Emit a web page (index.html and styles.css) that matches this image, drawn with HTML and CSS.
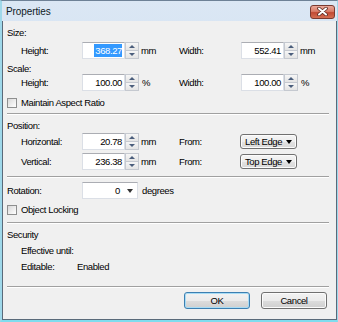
FILE: index.html
```html
<!DOCTYPE html>
<html lang="en">
<head>
    <meta charset="UTF-8">
    <title>Properties</title>
    <link rel="stylesheet" href="styles.css">
</head>
<body>
    <div class="window">
        <div class="titlebar">
            <span class="title">Properties</span>
            <span class="close">
                <svg width="11" height="9" viewBox="0 0 11 9">
                    <path d="M2 1.5 L9 7.5 M9 1.5 L2 7.5" stroke="#5a2a22" stroke-width="3.6" stroke-linecap="round"/>
                    <path d="M2 1.5 L9 7.5 M9 1.5 L2 7.5" stroke="#ffffff" stroke-width="2" stroke-linecap="round"/>
                </svg>
            </span>
        </div>

        <div class="client">
            <!-- Size -->
            <div class="label-row m7">Size:</div>
            <div class="field-row m4">
                <span>Height:</span>
                <span class="spin">
                    <span class="box"><span class="sel">368.27</span></span>
                    <span class="arrows"><i class="up"></i><i class="down"></i></span>
                </span>
                <span class="unit">mm</span>
                <span>Width:</span>
                <span class="spin">
                    <span class="box">552.41</span>
                    <span class="arrows"><i class="up"></i><i class="down"></i></span>
                </span>
                <span class="unit">mm</span>
            </div>

            <!-- Scale -->
            <div class="label-row m5">Scale:</div>
            <div class="field-row">
                <span>Height:</span>
                <span class="spin">
                    <span class="box">100.00</span>
                    <span class="arrows"><i class="up"></i><i class="down"></i></span>
                </span>
                <span class="unit pct">%</span>
                <span>Width:</span>
                <span class="spin">
                    <span class="box">100.00</span>
                    <span class="arrows"><i class="up"></i><i class="down"></i></span>
                </span>
                <span class="unit pct">%</span>
            </div>

            <div class="label-row m7"><span class="check"></span>Maintain Aspect Ratio</div>

            <div class="sep m5"></div>

            <!-- Position -->
            <div class="label-row m6">Position:</div>
            <div class="field-row m2">
                <span>Horizontal:</span>
                <span class="spin">
                    <span class="box">20.78</span>
                    <span class="arrows"><i class="up"></i><i class="down"></i></span>
                </span>
                <span class="unit">mm</span>
                <span>From:</span>
                <span class="combo">Left Edge<i class="caret"></i></span>
            </div>
            <div class="field-row m3">
                <span>Vertical:</span>
                <span class="spin">
                    <span class="box">236.38</span>
                    <span class="arrows"><i class="up"></i><i class="down"></i></span>
                </span>
                <span class="unit">mm</span>
                <span>From:</span>
                <span class="combo">Top Edge<i class="caret"></i></span>
            </div>

            <div class="sep m6"></div>

            <!-- Rotation -->
            <div class="rotation-row m4">
                <span>Rotation:</span>
                <span class="rot"><span class="rot-value">0</span><i class="caret"></i></span>
                <span class="unit">degrees</span>
            </div>

            <div class="label-row m6"><span class="check"></span>Object Locking</div>

            <div class="sep m7"></div>

            <!-- Security -->
            <div class="label-row m6">Security</div>
            <div class="label-row m6 indent">Effective until:</div>
            <div class="label-row m6 indent info">
                <span>Editable:</span>
                <span>Enabled</span>
            </div>

            <div class="sep m14"></div>

            <div class="buttons">
                <button class="btn default">OK</button>
                <button class="btn">Cancel</button>
            </div>
        </div>
    </div>
</body>
</html>
```

FILE: styles.css
```css
body {
    margin: 0;
    font-family: "Liberation Sans", Arial, sans-serif;
    font-size: 9.5px;
    letter-spacing: -0.4px;
    color: #000;
    background: #fff;
}
.window {
    width: 338px;
    height: 322px;
    box-sizing: border-box;
    border-top: 1px solid #6e8196;
    border-left: 2px solid #9fd8ea;
    border-right: 1px solid #9fd8ea;
    border-bottom: 2px solid #7fdcee;
    background: linear-gradient(#dbe7f4, #c9dbee 60%, #bfd3ea);
    display: flex;
    flex-direction: column;
}
.titlebar {
    height: 20px;
    display: flex;
    align-items: center;
    justify-content: space-between;
    padding-left: 4px;
}
.title {
    font-size: 10px;
    letter-spacing: -0.1px;
    color: #0f1a26;
}
.close {
    width: 25px;
    height: 14px;
    box-sizing: border-box;
    margin-right: 2px;
    margin-top: 1px;
    border: 1px solid #7a3a30;
    border-radius: 3px;
    background: linear-gradient(#eaa89a, #d97c68 45%, #c14a34 55%, #d56e52);
    display: flex;
    align-items: center;
    justify-content: center;
}
.client {
    flex: 1;
    background: #f0f0f0;
    border: 1px solid #5a6a7a;
    border-top: none;
    padding: 0 7px 0 4px;
    display: flex;
    flex-direction: column;
}
.m2 { margin-top: 2px; }
.m3 { margin-top: 3px; }
.m4 { margin-top: 4px; }
.m5 { margin-top: 5px; }
.m6 { margin-top: 6px; }
.m7 { margin-top: 7px; }
.m14 { margin-top: 14px; }
.label-row {
    height: 10px;
    line-height: 10px;
    display: flex;
    align-items: center;
    white-space: nowrap;
}
.indent {
    padding-left: 14px;
}
.info span:first-child {
    width: 56px;
}
.check {
    width: 10px;
    height: 10px;
    box-sizing: border-box;
    border: 1px solid #8e8f8f;
    background: linear-gradient(135deg, #d8d8d8, #f4f4f4 70%, #ffffff);
    margin-right: 4px;
}
.field-row {
    height: 17px;
    margin-left: 14px;
    display: grid;
    grid-template-columns: 61px 57px 40px 62px 57px auto;
    align-items: center;
    white-space: nowrap;
}
.unit {
    padding-left: 2px;
}
.pct {
    padding-left: 3px;
}
.spin {
    display: flex;
    height: 17px;
}
.box {
    width: 43px;
    box-sizing: border-box;
    background: #fff;
    border: 1px solid #dbdfe6;
    border-top-color: #abadb3;
    text-align: right;
    padding-right: 2px;
    line-height: 15px;
}
.sel {
    display: inline-block;
    background: #3399ff;
    color: #fff;
    line-height: 13px;
    padding-left: 1px;
}
.arrows {
    width: 14px;
    display: flex;
    flex-direction: column;
}
.arrows i {
    flex: 1;
    box-sizing: border-box;
    border: 1px solid #c5c9d0;
    background: linear-gradient(#f6f6f6, #e4e4e4);
    display: flex;
    align-items: center;
    justify-content: center;
}
.arrows i + i {
    border-top: none;
}
.arrows i::after {
    content: "";
    border-left: 3px solid transparent;
    border-right: 3px solid transparent;
}
.up::after {
    border-bottom: 3px solid #4b5e7c;
}
.down::after {
    border-top: 3px solid #4b5e7c;
}
.combo {
    width: 57px;
    height: 15px;
    box-sizing: border-box;
    border: 1px solid #707070;
    border-radius: 3px;
    background: linear-gradient(#f5f5f5, #ededed 50%, #e2e2e2 51%, #d8d8d8);
    box-shadow: inset 0 0 0 1px #fcfcfc;
    padding-left: 4px;
    display: flex;
    align-items: center;
    justify-content: space-between;
    margin-left: -1px;
}
.caret {
    width: 0;
    height: 0;
    border-left: 3.5px solid transparent;
    border-right: 3.5px solid transparent;
    border-top: 4px solid #000;
    margin-right: 4px;
}
.rotation-row {
    height: 17px;
    display: grid;
    grid-template-columns: 75px 56px auto;
    align-items: center;
}
.rot {
    height: 17px;
    box-sizing: border-box;
    background: #fff;
    border: 1px solid #dbdfe6;
    border-top-color: #abadb3;
    display: flex;
    align-items: center;
    justify-content: flex-end;
}
.rot-value {
    margin-right: 7px;
}
.rot .caret {
    border-top-color: #333;
}
.rotation-row .unit {
    padding-left: 4px;
}
.sep {
    height: 1px;
    border-top: 1px solid #a0a0a0;
    background: #fff;
}
.buttons {
    margin-top: 4px;
    display: flex;
    justify-content: flex-end;
    gap: 11px;
    padding-right: 2px;
}
.btn {
    width: 66px;
    height: 17px;
    box-sizing: border-box;
    border: 1px solid #707070;
    border-radius: 3px;
    background: linear-gradient(#f2f2f2, #ebebeb 50%, #dddddd 51%, #cfcfcf);
    box-shadow: inset 0 0 0 1px #fbfbfb;
    font-family: "Liberation Sans", Arial, sans-serif;
    font-size: 9.5px;
    letter-spacing: -0.4px;
    color: #000;
    padding: 0;
}
.btn.default {
    border-color: #3c7fb1;
    box-shadow: inset 0 0 0 1px #a8dcf5;
}
```
